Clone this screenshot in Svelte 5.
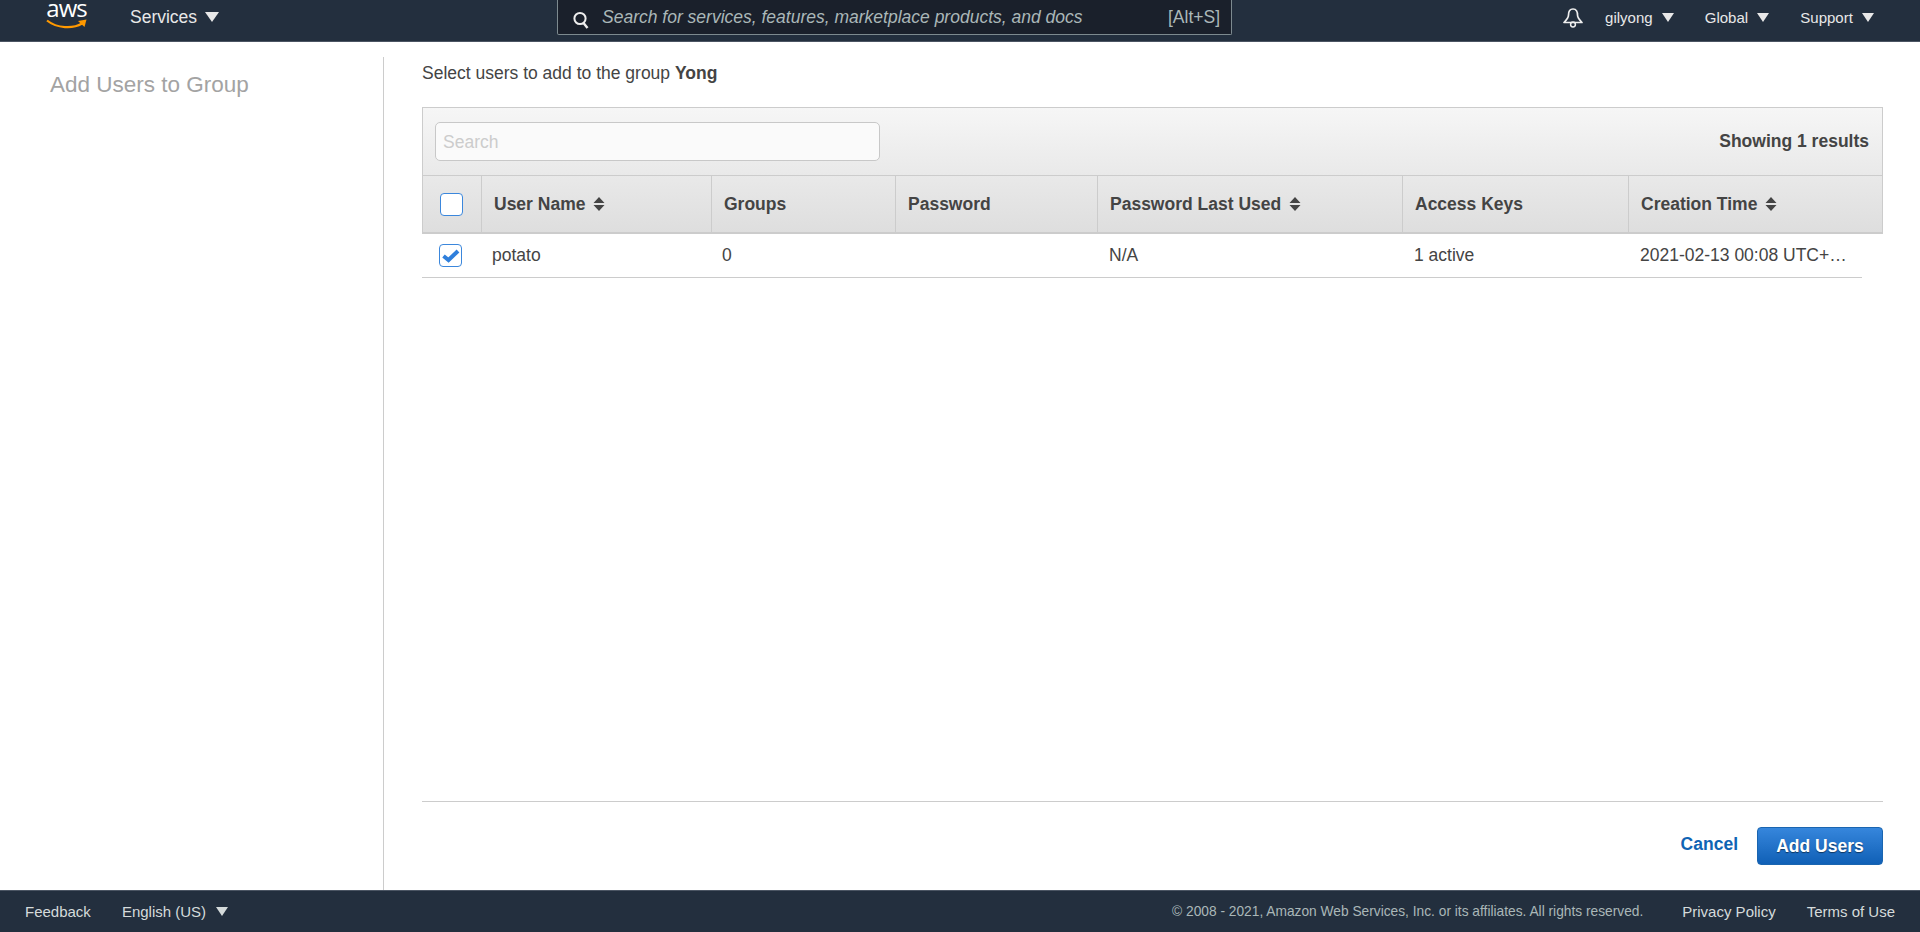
<script>
  const columns = [
    { label: "User Name", width: 230, sort: true },
    { label: "Groups", width: 184 },
    { label: "Password", width: 202 },
    { label: "Password Last Used", width: 305, sort: true },
    { label: "Access Keys", width: 226 },
    { label: "Creation Time", width: 255, sort: true },
  ];

  const cells = [
    { text: "potato", width: 230 },
    { text: "0", width: 184 },
    { text: "", width: 203 },
    { text: "N/A", width: 305 },
    { text: "1 active", width: 226 },
    { text: "2021-02-13 00:08 UTC+09:00", width: 233 },
  ];
  let checked = true;
</script>

<div class="page">
  <header class="topbar">
    <div class="top-left">
      <div class="logo">
        <span class="logo-text">aws</span>
        <svg width="41" height="11" viewBox="0 0 41 11">
          <path d="M1 1.5 C11 9.5 27 10 36 4.5" fill="none" stroke="#f90" stroke-width="2.2" />
          <path d="M32 2 L40.5 0.5 L38.5 8 Z" fill="#f90" />
        </svg>
      </div>
      <div class="nav-item services">Services <span class="caret big"></span></div>
    </div>
    <div class="search">
      <svg width="18" height="20" viewBox="0 0 18 20">
        <circle cx="8" cy="8.5" r="5.6" fill="none" stroke="#eee" stroke-width="2" />
        <path d="M11.5 13 L15.5 18" stroke="#eee" stroke-width="2.4" />
      </svg>
      <span class="search-text">Search for services, features, marketplace products, and docs</span>
      <span class="search-key">[Alt+S]</span>
    </div>
    <div class="top-right">
      <svg class="bell" width="20" height="20" viewBox="0 0 20 20">
        <path d="M10 1 C6.5 1 5.5 4 5.5 7 C5.5 10 3.5 12 1 14.5 L19 14.5 C16.5 12 14.5 10 14.5 7 C14.5 4 13.5 1 10 1 Z" fill="none" stroke="#eee" stroke-width="1.7" stroke-linejoin="round" />
        <circle cx="10" cy="16.5" r="2.4" fill="none" stroke="#eee" stroke-width="1.5" />
      </svg>
      <div class="nav-item user">gilyong <span class="caret"></span></div>
      <div class="nav-item global">Global <span class="caret"></span></div>
      <div class="nav-item support">Support <span class="caret"></span></div>
    </div>
  </header>

  <div class="body">
    <aside class="sidebar">
      <h1>Add Users to Group</h1>
    </aside>
    <main class="content">
      <p class="intro">Select users to add to the group <b>Yong</b></p>

      <div class="table-wrap">
        <div class="toolbar">
          <input class="filter" placeholder="Search" />
          <span class="showing">Showing 1 results</span>
        </div>
        <div class="head">
          <div class="head-check"><span class="box"></span></div>
          {#each columns as col}
            <div class="th" style="width: {col.width}px">
              {col.label}
              {#if col.sort}
                <svg width="12" height="16" viewBox="0 0 12 16">
                  <path d="M6 1 L11.5 7 L0.5 7 Z M6 15 L11.5 9 L0.5 9 Z" fill="#444" />
                </svg>
              {/if}
            </div>
          {/each}
        </div>
      </div>

      <div class="row">
        <div class="row-check">
          <button class="box" aria-label="Select potato" onclick={() => (checked = !checked)}>
            {#if checked}
              <svg width="18" height="14" viewBox="0 0 18 14">
                <path d="M1.5 7 L6.5 11 L16 2" fill="none" stroke="#2f7fdc" stroke-width="4" />
              </svg>
            {/if}
          </button>
        </div>
        {#each cells as cell}
          <div class="td" style="width: {cell.width}px">{cell.text}</div>
        {/each}
      </div>

      <div class="actions">
        <a class="cancel" href="#cancel">Cancel</a>
        <button class="primary">Add Users</button>
      </div>
    </main>
  </div>

  <footer class="footer">
    <span class="feedback">Feedback</span>
    <span class="lang">English (US) <span class="caret"></span></span>
    <span class="copy">© 2008 - 2021, Amazon Web Services, Inc. or its affiliates. All rights reserved.</span>
    <span class="flink privacy">Privacy Policy</span>
    <span class="flink">Terms of Use</span>
  </footer>
</div>

<style>
  :global(body) {
    font-family: "Liberation Sans", Arial, sans-serif;
    color: #444;
    background: #fff;
  }

  .page {
    display: flex;
    flex-direction: column;
    height: 932px;
    overflow: hidden;
  }

  .topbar {
    display: flex;
    align-items: flex-start;
    height: 41px;
    flex: none;
    background: #232f3e;
    border-bottom: 1px solid #4b5563;
    color: #eee;
  }

  .top-left {
    display: flex;
    align-items: flex-start;
    width: 557px;
    flex: none;
    height: 34px;
  }

  .logo {
    display: flex;
    flex-direction: column;
    align-items: center;
    width: 41px;
    margin-left: 46px;
  }

  .logo-text {
    font-family: "Open Sans", sans-serif;
    font-size: 24px;
    letter-spacing: -1px;
    line-height: 15px;
    color: #fff;
  }

  .logo svg {
    display: block;
    margin-top: 4px;
  }

  .nav-item {
    display: flex;
    align-items: center;
    gap: 5px;
    font-size: 15px;
    color: #e8e8e8;
    white-space: pre;
    height: 34px;
  }

  .services {
    margin-left: 43px;
    font-size: 17.5px;
    gap: 3px;
  }

  .caret {
    display: inline-block;
    width: 0;
    height: 0;
    border-left: 6px solid transparent;
    border-right: 6px solid transparent;
    border-top: 9px solid #e8e8e8;
  }

  .caret.big {
    border-left-width: 7px;
    border-right-width: 7px;
    border-top-width: 10px;
  }

  .search {
    display: flex;
    align-items: center;
    width: 675px;
    height: 35px;
    flex: none;
    padding: 0 11px 0 14px;
    box-sizing: border-box;
    background: #1a202b;
    border: 1px solid #7d8a8f;
    border-top: none;
    border-radius: 0 0 2px 2px;
  }

  .search svg {
    margin-top: 5px;
  }

  .search-text {
    margin-left: 12px;
    font-size: 17.5px;
    font-style: italic;
    color: #aab7b8;
    flex: 1;
    white-space: nowrap;
  }

  .search-key {
    font-size: 17.5px;
    color: #aab7b8;
  }

  .top-right {
    display: flex;
    align-items: center;
    height: 34px;
    margin-left: auto;
  }

  .bell {
    margin-top: 1px;
  }

  .user {
    margin-left: 22px;
  }

  .global {
    margin-left: 31px;
  }

  .support {
    margin-left: 31px;
    margin-right: 46px;
  }

  .body {
    display: flex;
    flex: 1;
    min-height: 0;
    padding-top: 15px;
  }

  .sidebar {
    padding-left: 50px;
    box-sizing: border-box;
    flex: none;
    border-right: 1px solid #ccc;
    width: 384px;
  }

  h1 {
    margin: 14px 0 0;
    font-size: 22.5px;
    line-height: 28px;
    font-weight: 400;
    color: #a3a3a3;
  }

  .content {
    display: flex;
    flex-direction: column;
    margin-left: 38px;
    width: 1461px;
  }

  .intro {
    margin: 6px 0 0;
    font-size: 17.5px;
    line-height: 20px;
    color: #444;
  }

  .table-wrap {
    margin-top: 24px;
    border: 1px solid #ccc;
    border-bottom-width: 2px;
    background: linear-gradient(#f6f6f6, #dedede);
  }

  .toolbar {
    display: flex;
    align-items: center;
    justify-content: space-between;
    height: 67px;
    padding: 0 13px 0 12px;
    border-bottom: 1px solid #ccc;
  }

  .filter {
    width: 445px;
    height: 39px;
    box-sizing: border-box;
    padding: 1px 7px 0;
    font: 17.5px "Liberation Sans", Arial, sans-serif;
    background: #fafafa;
    border: 1px solid #c8c8c8;
    border-radius: 5px;
  }

  .filter::placeholder {
    color: #ccc;
  }

  .showing {
    font-size: 17.5px;
    font-weight: 700;
    color: #444;
    margin-top: -1px;
  }

  .head {
    display: flex;
    height: 56px;
  }

  .head-check {
    display: flex;
    align-items: center;
    width: 59px;
    padding-left: 17px;
    box-sizing: border-box;
    border-right: 1px solid #ccc;
  }

  .box {
    display: flex;
    align-items: center;
    justify-content: center;
    width: 23px;
    height: 23px;
    padding: 0;
    box-sizing: border-box;
    background: #fff;
    border: 1px solid #3b87dc;
    border-radius: 4px;
  }

  .th {
    display: flex;
    align-items: center;
    gap: 3px;
    padding-left: 12px;
    box-sizing: border-box;
    font-size: 17.5px;
    font-weight: 700;
    color: #444;
    border-right: 1px solid #ccc;
    white-space: pre;
  }

  .th:last-child {
    border-right: none;
    flex: 1;
  }

  .row {
    display: flex;
    align-items: center;
    height: 43px;
    width: 1440px;
    border-bottom: 1px solid #ccc;
    flex: none;
  }

  .row-check {
    width: 59px;
    padding-left: 17px;
    box-sizing: border-box;
  }

  .td {
    padding-left: 11px;
    box-sizing: border-box;
    font-size: 17.5px;
    color: #444;
    white-space: nowrap;
    overflow: hidden;
    text-overflow: ellipsis;
    padding-right: 10px;
  }

  .actions {
    display: flex;
    align-items: center;
    justify-content: flex-end;
    gap: 19px;
    margin-top: auto;
    margin-bottom: 25px;
    padding-top: 25px;
    border-top: 1px solid #ccc;
  }

  .cancel {
    font-size: 17.5px;
    font-weight: 700;
    color: #0f64b4;
    text-decoration: none;
    margin-top: -4px;
  }

  .primary {
    width: 126px;
    height: 38px;
    font: 700 17.5px "Liberation Sans", Arial, sans-serif;
    color: #fff;
    text-shadow: 0 1px 1px rgba(0, 0, 0, 0.5);
    background: linear-gradient(#3686dc, #1060b6);
    border: 1px solid #1a65b0;
    border-radius: 4px;
  }

  .footer {
    display: flex;
    align-items: center;
    height: 41px;
    flex: none;
    background: #232f3e;
    border-top: 1px solid #4b5563;
    font-size: 15px;
    color: #d5dbdb;
  }

  .feedback {
    margin-left: 25px;
  }

  .lang {
    display: flex;
    align-items: center;
    gap: 6px;
    margin-left: 31px;
    white-space: pre;
  }

  .lang .caret {
    border-top-color: #d5dbdb;
  }

  .copy {
    margin-left: auto;
    font-size: 13.75px;
    color: #aab7b8;
  }

  .flink {
    margin-left: 31px;
    color: #d5dbdb;
  }

  .flink:last-child {
    margin-right: 25px;
  }

  .privacy {
    margin-left: 39px;
  }
</style>
